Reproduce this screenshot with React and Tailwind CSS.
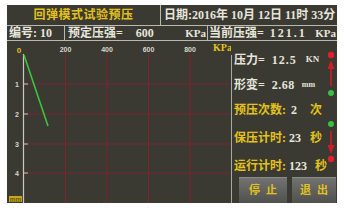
const cjk = { fontFamily: '"Liberation Serif", "Noto Sans CJK SC", serif' };

function Chart() {
  const xs = [58.5, 100, 141.5, 183];
  const ys = [43, 73, 103, 132];
  return (
    <svg width="224" height="162" viewBox="0 0 224 162" className="block">
      {xs.map((x) => (
        <line key={x} x1={x} y1="12" x2={x} y2="162" stroke="#7a2630" strokeWidth="1.2" />
      ))}
      {ys.map((y) => (
        <line key={y} x1="17" y1={y} x2="224" y2={y} stroke="#7a2630" strokeWidth="1.2" />
      ))}
      <line x1="16.5" y1="13" x2="16.5" y2="162" stroke="#c9c9c0" strokeWidth="1.2" />
      {ys.map((y, i) => (
        <g key={"t" + y}>
          <line x1="17" y1={y} x2="21" y2={y} stroke="#c9c9c0" strokeWidth="1" />
          <text x="10" y={y + 2.5} fontSize="7" fontWeight="bold" fill="#d6d6cc" textAnchor="middle" fontFamily="Liberation Sans, sans-serif">
            {i + 1}
          </text>
        </g>
      ))}
      {[200, 400, 600, 800].map((v, i) => (
        <text key={v} x={xs[i]} y="11" fontSize="7" fontWeight="bold" fill="#d6d6cc" textAnchor="middle" fontFamily="Liberation Sans, sans-serif">
          {v}
        </text>
      ))}
      <text x="12" y="12" fontSize="8" fontWeight="bold" fill="#e0c020" textAnchor="middle" fontFamily="Liberation Sans, sans-serif">0</text>
      <text x="206" y="10" fontSize="10" fontWeight="bold" fill="#e6c31c" fontFamily="Liberation Serif, serif">KPa</text>
      <line x1="17" y1="14" x2="41" y2="85" stroke="#3cc43f" strokeWidth="1.6" />
      <rect x="2" y="155" width="13" height="6" fill="#c8a81a" />
      <text x="8.5" y="160.5" fontSize="6.5" fontWeight="bold" fill="#6a5a10" textAnchor="middle" fontFamily="Liberation Sans, sans-serif">mm</text>
    </svg>
  );
}

// red/green status markers down the right edge of the panel
function Indicators() {
  return (
    <svg width="12" height="135" viewBox="0 0 12 135" className="block">
      <circle cx="6" cy="14" r="3.2" fill="#e0202a" />
      <line x1="6" y1="24" x2="6" y2="45" stroke="#d01c26" strokeWidth="1.6" />
      <polygon points="6,19 2.5,28 9.5,28" fill="#d01c26" />
      <circle cx="6" cy="52" r="3" fill="#35c23c" />
      <circle cx="6" cy="83" r="3" fill="#35c23c" />
      <line x1="6" y1="90" x2="6" y2="108" stroke="#d01c26" strokeWidth="1.6" />
      <polygon points="6,113 2.5,104 9.5,104" fill="#d01c26" />
      <circle cx="6" cy="118" r="3.2" fill="#e0202a" />
    </svg>
  );
}

function Btn({ label, w }) {
  return (
    <div
      className={`${w} h-[26px] flex items-center justify-center text-[11px] font-bold text-[#e2c21e] tracking-[6px] pl-[6px] bg-gradient-to-b from-[#727270] to-[#50504d] border-t border-[#8a8a86]`}
      style={cjk}
    >
      {label}
    </div>
  );
}

export default function App() {
  return (
    <div className="w-[344px] h-[210px] bg-white pt-[5px] pl-[7px] overflow-hidden">
      <div className="w-[330px] h-[198px] bg-[#3a3932] flex flex-col text-[#e6e6dc]" style={cjk}>
        <div className="h-[21px] flex border-b border-[#b9b9b0]">
          <div className="w-[154px] flex items-center justify-center border-r border-[#b9b9b0] text-[12px] font-bold text-[#e3c21c] tracking-[0.5px]">
            回弹模式试验预压
          </div>
          <div className="flex-1 flex items-center pl-[3px] text-[12px] font-bold whitespace-nowrap">
            日期:2016年 10月 12日 11时 33分
          </div>
        </div>
        <div className="h-[15px] flex border-b border-[#b9b9b0] text-[12px] font-bold whitespace-nowrap">
          <div className="w-[58px] flex items-center pl-[2px] border-r border-[#b9b9b0]">编号: 10</div>
          <div className="w-[143px] flex items-center justify-between pl-[3px] pr-[1px] border-r border-[#b9b9b0]">
            <span>
              预定压强=<span className="ml-[13px]">600</span>
            </span>
            <span className="text-[11px]">KPa</span>
          </div>
          <div className="flex-1 flex items-center justify-between pl-[1px] pr-[1px]">
            <span>
              当前压强=<span className="ml-[6px] tracking-[2px]">121.1</span>
            </span>
            <span className="text-[11px]">KPa</span>
          </div>
        </div>
        <div className="flex-1 flex">
          <div className="w-[224px]">
            <Chart />
          </div>
          <div className="flex-1 flex flex-col relative">
            <div className="h-[14px]"></div>
            <div className="flex-1 flex flex-col border-l border-[#a9a9a0] text-[12px] font-bold whitespace-nowrap">
              <div className="h-[10px] flex items-center pl-[2px]">
                压力=<span className="ml-[7px] tracking-[1px]">12.5</span>
                <span className="ml-[9px] text-[9px]">KN</span>
              </div>
              <div className="h-[10px] mt-[15px] flex items-center pl-[2px]">
                形变=<span className="ml-[7px] tracking-[0.5px]">2.68</span>
                <span className="ml-[7px] text-[8px]">mm</span>
              </div>
              <div className="h-[10px] mt-[15px] flex items-center pl-[2px] text-[#e3c21c]">
                预压次数:<span className="ml-[5px] text-[#e6e6dc]">2</span>
                <span className="ml-[13px]">次</span>
              </div>
              <div className="h-[10px] mt-[18px] flex items-center pl-[2px] text-[#e3c21c]">
                保压计时:<span className="ml-[3px] text-[#e6e6dc]">23</span>
                <span className="ml-[9px]">秒</span>
              </div>
              <div className="h-[10px] mt-[18px] flex items-center pl-[2px] text-[#e3c21c]">
                运行计时:<span className="ml-[3px] text-[#e6e6dc]">123</span>
                <span className="ml-[8px]">秒</span>
              </div>
              <div className="mt-auto flex gap-[5px] pl-[7px]">
                <Btn label="停止" w="w-[48px]" />
                <Btn label="退出" w="w-[44px]" />
              </div>
            </div>
            <div className="absolute top-0 right-0">
              <Indicators />
            </div>
          </div>
        </div>
      </div>
    </div>
  );
}
